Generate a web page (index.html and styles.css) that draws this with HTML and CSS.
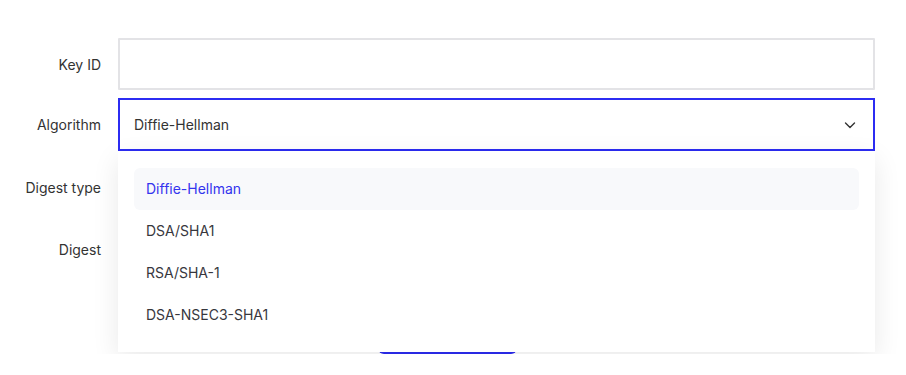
FILE: index.html
```html
<!DOCTYPE html>
<html lang="en">
<head>
    <meta charset="UTF-8">
    <meta name="viewport" content="width=device-width, initial-scale=1.0">
    <title>Add DS record</title>
    <link rel="stylesheet" href="styles.css">
</head>
<body>
    <form class="ds-form">
        <div class="row">
            <label class="label" for="keyId">Key ID</label>
            <input class="field" type="text" id="keyId">
        </div>

        <div class="row">
            <label class="label">Algorithm</label>
            <div class="select-wrap">
                <div class="select open">
                    <span>Diffie-Hellman</span>
                    <svg class="chevron" width="14" height="14" viewBox="0 0 14 14" fill="none">
                        <path d="M2.5 5l4.5 4.5L11.5 5" stroke="#333" stroke-width="1.4" stroke-linecap="round" stroke-linejoin="round"/>
                    </svg>
                </div>
                <ul class="options">
                    <li class="option selected">Diffie-Hellman</li>
                    <li class="option">DSA/SHA1</li>
                    <li class="option">RSA/SHA-1</li>
                    <li class="option">DSA-NSEC3-SHA1</li>
                    <li class="option">RSASHA1-NSEC3-SHA1</li>
                </ul>
            </div>
        </div>

        <div class="row">
            <label class="label" for="digestType">Digest type</label>
            <input class="field" type="text" id="digestType">
        </div>

        <div class="row">
            <label class="label" for="digest">Digest</label>
            <input class="field" type="text" id="digest">
        </div>

        <div class="actions">
            <button type="button" class="btn">Add record</button>
        </div>
    </form>
</body>
</html>
```

FILE: styles.css
```css
* {
    box-sizing: border-box;
    margin: 0;
    padding: 0;
}

body {
    background: #fff;
    font-family: 'Inter', 'Noto Sans', sans-serif;
    font-size: 14px;
    color: #333;
}

.ds-form {
    padding: 38px 31px 0 0;
    display: flex;
    flex-direction: column;
    gap: 8px;
}

.row {
    display: grid;
    grid-template-columns: 101px 1fr;
    column-gap: 17px;
    align-items: center;
    min-height: 52px;
    margin-bottom: 2px;
}

.row:first-child {
    margin-bottom: 0;
}

.label {
    text-align: right;
    color: #333;
}

.field {
    height: 52px;
    width: 100%;
    border: 2px solid #e3e3e6;
    border-radius: 1px;
    font: inherit;
    padding: 0 14px;
    outline: none;
}

.select-wrap {
    position: relative;
}

.select {
    height: 53px;
    border: 2px solid #2c2cf2;
    display: flex;
    align-items: center;
    justify-content: space-between;
    padding: 0 16px 0 14px;
    color: #333;
}

.options {
    position: absolute;
    top: 53px;
    left: 0;
    right: 0;
    height: 201px;
    overflow: hidden;
    list-style: none;
    background: #fff;
    padding: 17px 16px 0;
    box-shadow: 0 8px 26px rgba(0, 0, 0, 0.09);
    z-index: 2;
}

.option {
    height: 42px;
    line-height: 42px;
    padding: 0 12px;
    border-radius: 6px;
    color: #37373d;
}

.option:last-child {
    line-height: 43px;
    color: #b8b8bc;
}

.option.selected {
    background: #f8f9fb;
    color: #3434ee;
}

.actions {
    padding-left: 378px;
    margin-top: 27px;
}

.btn {
    width: 139px;
    height: 42px;
    border: none;
    border-radius: 6px;
    background: #2c2cf2;
    color: #fff;
    font: inherit;
    font-weight: 600;
}
```
